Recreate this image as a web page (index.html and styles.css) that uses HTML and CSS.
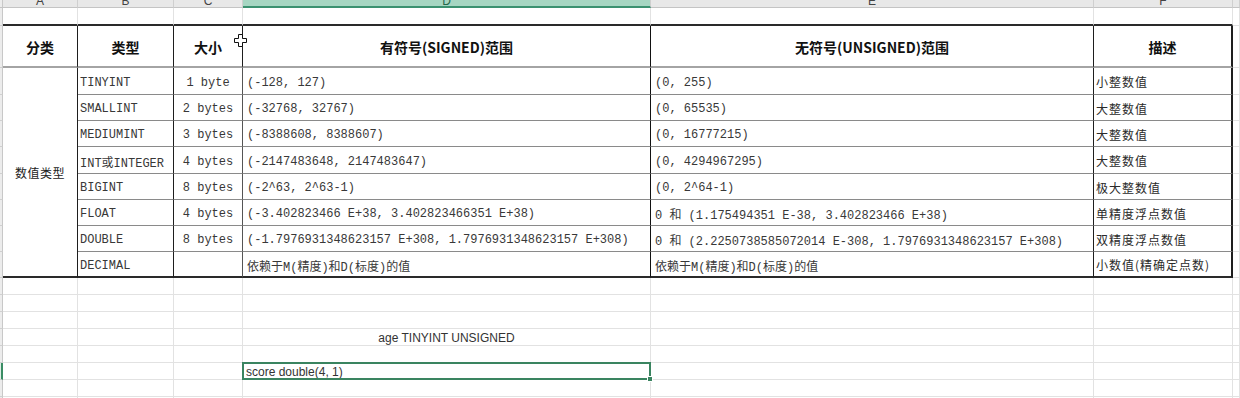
FILE: index.html
```html
<!DOCTYPE html>
<html lang="zh-CN">
<head>
<meta charset="utf-8">
<title>MySQL 数值类型</title>
<link rel="stylesheet" href="styles.css">
</head>
<body>
<div class="sheet">
  <!-- column header bar -->
  <div class="rh corner"></div>
  <div class="ch"><span>A</span></div>
  <div class="ch"><span>B</span></div>
  <div class="ch"><span>C</span></div>
  <div class="ch sel"><span>D</span></div>
  <div class="ch"><span>E</span></div>
  <div class="ch"><span>F</span></div>
  <div class="ch"></div>

  <!-- row 1 -->
  <div class="rh"></div>
  <div class="c top"></div>
  <div class="c top"></div>
  <div class="c top"></div>
  <div class="c top"></div>
  <div class="c top"></div>
  <div class="c top"></div>
  <div class="c"></div>

  <!-- table header -->
  <div class="rh"></div>
  <div class="c th">分类</div>
  <div class="c th">类型</div>
  <div class="c th">大小</div>
  <div class="c th dcol">有符号(SIGNED)范围</div>
  <div class="c th">无符号(UNSIGNED)范围</div>
  <div class="c th fcol">描述</div>
  <div class="c"></div>

  <!-- merged category cell -->
  <div class="c cat">数值类型</div>

  <div class="rh"></div>
  <div class="c td">TINYINT</div>
  <div class="c td size">1 byte</div>
  <div class="c td dcol">(-128, 127)</div>
  <div class="c td ecol">(0, 255)</div>
  <div class="c td fcol cn">小整数值</div>
  <div class="c"></div>

  <div class="rh"></div>
  <div class="c td">SMALLINT</div>
  <div class="c td size">2 bytes</div>
  <div class="c td dcol">(-32768, 32767)</div>
  <div class="c td ecol">(0, 65535)</div>
  <div class="c td fcol cn">大整数值</div>
  <div class="c"></div>

  <div class="rh"></div>
  <div class="c td">MEDIUMINT</div>
  <div class="c td size">3 bytes</div>
  <div class="c td dcol">(-8388608, 8388607)</div>
  <div class="c td ecol">(0, 16777215)</div>
  <div class="c td fcol cn">大整数值</div>
  <div class="c"></div>

  <div class="rh"></div>
  <div class="c td">INT或INTEGER</div>
  <div class="c td size">4 bytes</div>
  <div class="c td dcol">(-2147483648, 2147483647)</div>
  <div class="c td ecol">(0, 4294967295)</div>
  <div class="c td fcol cn">大整数值</div>
  <div class="c"></div>

  <div class="rh"></div>
  <div class="c td">BIGINT</div>
  <div class="c td size">8 bytes</div>
  <div class="c td dcol">(-2^63, 2^63-1)</div>
  <div class="c td ecol">(0, 2^64-1)</div>
  <div class="c td fcol cn">极大整数值</div>
  <div class="c"></div>

  <div class="rh"></div>
  <div class="c td">FLOAT</div>
  <div class="c td size">4 bytes</div>
  <div class="c td dcol">(-3.402823466 E+38, 3.402823466351 E+38)</div>
  <div class="c td ecol">0 和 (1.175494351 E-38, 3.402823466 E+38)</div>
  <div class="c td fcol cn">单精度浮点数值</div>
  <div class="c"></div>

  <div class="rh"></div>
  <div class="c td">DOUBLE</div>
  <div class="c td size">8 bytes</div>
  <div class="c td dcol">(-1.7976931348623157 E+308, 1.7976931348623157 E+308)</div>
  <div class="c td ecol">0 和 (2.2250738585072014 E-308, 1.7976931348623157 E+308)</div>
  <div class="c td fcol cn">双精度浮点数值</div>
  <div class="c"></div>

  <div class="rh"></div>
  <div class="c td last">DECIMAL</div>
  <div class="c td size last"></div>
  <div class="c td dcol last">依赖于M(精度)和D(标度)的值</div>
  <div class="c td ecol last">依赖于M(精度)和D(标度)的值</div>
  <div class="c td fcol cn last">小数值(精确定点数)</div>
  <div class="c"></div>

  <!-- blank rows -->
  <div class="rh"></div><div class="c"></div><div class="c"></div><div class="c"></div><div class="c"></div><div class="c"></div><div class="c"></div><div class="c"></div>
  <div class="rh"></div><div class="c"></div><div class="c"></div><div class="c"></div><div class="c"></div><div class="c"></div><div class="c"></div><div class="c"></div>
  <div class="rh"></div><div class="c"></div><div class="c"></div><div class="c"></div><div class="c"></div><div class="c"></div><div class="c"></div><div class="c"></div>
  <div class="rh"></div><div class="c"></div><div class="c"></div><div class="c"></div><div class="c txt center">age TINYINT UNSIGNED</div><div class="c"></div><div class="c"></div><div class="c"></div>
  <div class="rh"></div><div class="c"></div><div class="c"></div><div class="c"></div><div class="c"></div><div class="c"></div><div class="c"></div><div class="c"></div>
  <div class="rh active"></div><div class="c"></div><div class="c"></div><div class="c"></div><div class="c txt selcell">score double(4, 1)</div><div class="c"></div><div class="c"></div><div class="c"></div>
  <div class="rh"></div><div class="c"></div><div class="c"></div><div class="c"></div><div class="c"></div><div class="c"></div><div class="c"></div><div class="c"></div>
  <div class="rh"></div><div class="c"></div><div class="c"></div><div class="c"></div><div class="c"></div><div class="c"></div><div class="c"></div><div class="c"></div>

  <svg class="cursor" width="13" height="13" viewBox="0 0 13 13" aria-hidden="true">
    <path d="M4.5 0.5h4v4h4v4h-4v4h-4v-4h-4v-4h4z" fill="#fff" stroke="#111" stroke-width="1"/>
  </svg>
</div>
</body>
</html>
```
FILE: styles.css
```css
html, body {
  margin: 0;
  padding: 0;
  background: #fff;
  overflow: hidden;
}

.sheet {
  position: relative;
  display: grid;
  grid-template-columns: 3px 75px 96px 69px 408px 443px 139px 7px;
  grid-template-rows: 8px 18px 42px 27px 26px 26px 27px 26px 26px 26px 26px repeat(8, 17px);
  width: 1240px;
  height: 398px;
  overflow: hidden;
  font-family: "Liberation Sans", "Noto Sans CJK SC", sans-serif;
}

.c {
  box-sizing: border-box;
  border-right: 1px solid #e2e2e2;
  border-bottom: 1px solid #e2e2e2;
  white-space: nowrap;
  overflow: hidden;
  min-width: 0;
}

/* row header strip (cut off at the left) */
.rh {
  box-sizing: border-box;
  background: #ececec;
  border-right: 1px solid #c8c8c8;
  border-bottom: 1px solid #d0d0d0;
}
.rh.corner {
  border-bottom: 1px solid #c4c4c4;
}
.rh.active {
  background: #dfeee6;
  border-right: 2px solid #3a8c64;
}

/* column header bar */
.ch {
  box-sizing: border-box;
  background: #e8e8e8;
  border-right: 1px solid #cfcfcf;
  border-bottom: 1px solid #c4c4c4;
  text-align: center;
  font-size: 12px;
  line-height: 14px;
  color: #444;
  overflow: hidden;
}
.ch span {
  display: block;
  margin-top: -6px;
}
.ch.sel {
  background: #a6d6c2;
  border-bottom: 2px solid #3b9170;
  color: #24684a;
}

/* thick line above the table */
.top {
  border-bottom: 2px solid #2a2a2a;
}

/* table header row */
.th {
  display: flex;
  align-items: center;
  justify-content: center;
  padding-top: 1px;
  font-family: "Noto Sans CJK SC", sans-serif;
  font-weight: bold;
  font-size: 14px;
  color: #111;
  border-right: 1px solid #1e1e1e;
  border-bottom: 2px solid #a4a4a4;
}

/* merged category cell */
.cat {
  grid-column: 2;
  grid-row: 4 / span 8;
  display: flex;
  align-items: center;
  justify-content: center;
  font-family: "Noto Sans CJK SC", sans-serif;
  font-size: 12px;
  letter-spacing: 0.5px;
  color: #222;
  border-right: 1px solid #1e1e1e;
  border-bottom: 2px solid #2a2a2a;
}

/* table body cells */
.td {
  display: flex;
  align-items: center;
  padding-left: 2px;
  padding-top: 3px;
  font-family: "Liberation Mono", "Noto Sans CJK SC", monospace;
  font-size: 12px;
  color: #383838;
  border-right: 1px solid #1e1e1e;
  border-bottom: 1px solid #8a8a8a;
}
.td.size {
  justify-content: center;
  padding-left: 0;
  border-right-color: #555;
}
.td.dcol {
  padding-left: 4px;
  border-right-color: #111;
}
.td.ecol {
  padding-left: 4px;
}
.th.fcol, .td.fcol {
  border-right: 2px solid #1e1e1e;
}
.td.cn {
  font-family: "Noto Sans CJK SC", sans-serif;
  letter-spacing: 1px;
  padding-left: 2px;
  padding-top: 1px;
  color: #2a2a2a;
}
.th.dcol {
  border-right-color: #111;
}
.td.last {
  border-bottom: 2px solid #2a2a2a;
}

/* free text cells */
.txt {
  display: flex;
  align-items: center;
  padding-left: 3px;
  font-size: 12px;
  color: #333;
}
.txt.center {
  justify-content: center;
  padding-left: 0;
  padding-top: 1px;
}

.selcell {
  position: relative;
  overflow: visible;
  padding-top: 1px;
}
.selcell::after {
  content: "";
  position: absolute;
  left: -1px;
  top: -1px;
  right: -1px;
  bottom: -1px;
  border: 2px solid #3a8460;
  pointer-events: none;
}
.selcell::before {
  content: "";
  position: absolute;
  right: -3px;
  bottom: -3px;
  width: 4px;
  height: 4px;
  background: #3a8460;
  border: 1px solid #fff;
  z-index: 2;
}

.cursor {
  position: absolute;
  left: 234px;
  top: 34px;
}
```
